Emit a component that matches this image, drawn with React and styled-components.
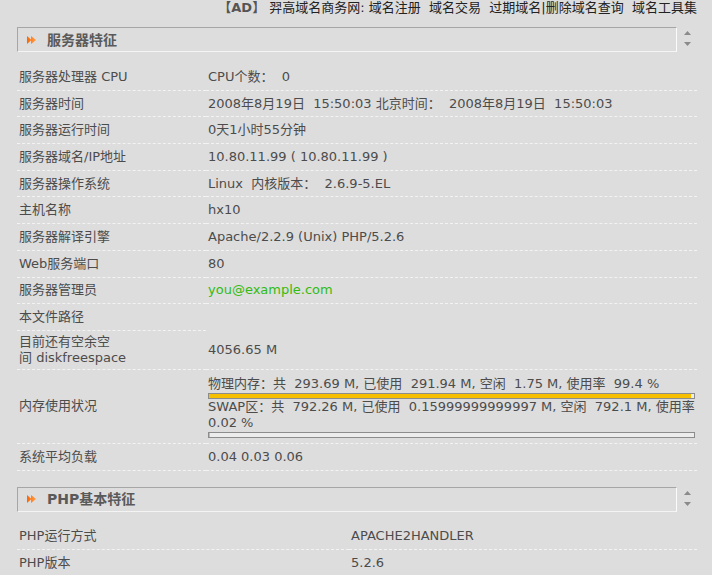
import React from "react";
import styled, { createGlobalStyle } from "styled-components";

// ------------------------------

const GlobalStyle = createGlobalStyle`
	html, body {
		margin: 0;
		background: #dddddd;
	}

	body {
		font-family: "DejaVu Sans", "Noto Sans CJK SC", sans-serif;
		font-size: 13px;
		color: #4c4c4c;
	}
`;

const Page = styled.div`
	padding: 0 15px 0 17px;
`;

const AdBar = styled.div`
	text-align: right;
	line-height: 16px;
	color: #222;
	white-space: pre;

	b {
		font-weight: bold;
		color: #555;
	}
`;

const SectionHead = styled.div`
	display: flex;
	margin-top: ${ p => p.$top }px;
	height: 25px;
`;

const HeadBox = styled.div`
	flex: 1;
	box-sizing: border-box;
	height: 25px;
	border: 1px solid;
	border-color: #a6a6a6 #fbfbfb #f4f4f4 #a6a6a6;
	display: flex;
	align-items: center;
	gap: 11px;
	padding-left: 9px;
`;

const HeadTitle = styled.span`
	font-size: 14px;
	font-weight: bold;
	color: #5a5a5a;
	line-height: 16px;
`;

const Spinner = styled.div`
	width: 20px;
	display: flex;
	flex-direction: column;
	align-items: center;
	justify-content: space-between;
	padding: 4px 0 6px;
	box-sizing: border-box;
`;

const InfoGrid = styled.div`
	display: grid;
	grid-template-columns: ${ p => p.$label }px 1fr;
	margin-top: 12px;
`;

const Cell = styled.div`
	box-sizing: border-box;
	min-height: 26.7px;
	padding: ${ p => p.$pad || "3px 2px" };
	line-height: 16px;
	display: flex;
	align-items: center;
	white-space: pre-wrap;
	border-bottom: 1px dashed ${ p => p.$bare ? "transparent" : "#f3f3f3" };
	color: ${ p => p.$link ? "#33bb11" : "#4c4c4c" };
`;

const MemBlock = styled.div`
	width: 100%;
	line-height: 16px;
`;

const Bar = styled.div`
	box-sizing: border-box;
	height: 6px;
	margin-top: 1px;
	border: 1px solid #8c8c8c;
	background: #ececec;
`;

const BarFill = styled.div`
	height: 100%;
	min-width: 1px;
	background: #f6c000;
`;

// ------------------------------

const Arrows = () => (
	<svg width = "9" height = "8" viewBox = "0 0 9 8">
		<defs>
			<linearGradient id = "orangeGrad" x1 = "0" x2 = "1" y1 = "0" y2 = "0">
				<stop offset = "0" stopColor = "#ff6400" />
				<stop offset = "1" stopColor = "#ffa04a" />
			</linearGradient>
		</defs>
		<path d = "M0 0 L4.5 4 L0 8 Z M4 0 L9 4 L4 8 Z" fill = "url(#orangeGrad)" />
	</svg>
);

const Triangle = ({ down }) => (
	<svg width = "7" height = "4" viewBox = "0 0 7 4">
		<path d = { down ? "M0 0 L7 0 L3.5 4 Z" : "M3.5 0 L7 4 L0 4 Z" } fill = "#8a8a8a" />
	</svg>
);

const Section = ({ title, top }) => (
	<SectionHead $top = { top }>
		<HeadBox>
			<Arrows />
			<HeadTitle>{ title }</HeadTitle>
		</HeadBox>
		<Spinner>
			<Triangle />
			<Triangle down />
		</Spinner>
	</SectionHead>
);

const serverRows = [
	[ "服务器处理器\u00a0CPU", "CPU个数：  0" ],
	[ "服务器时间", "2008年8月19日  15:50:03 北京时间：  2008年8月19日  15:50:03" ],
	[ "服务器运行时间", "0天1小时55分钟" ],
	[ "服务器域名/IP地址", "10.80.11.99 ( 10.80.11.99 )" ],
	[ "服务器操作系统", "Linux  内核版本：  2.6.9-5.EL" ],
	[ "主机名称", "hx10" ],
	[ "服务器解译引擎", "Apache/2.2.9 (Unix) PHP/5.2.6" ],
	[ "Web服务端口", "80" ],
	[ "服务器管理员", "you@example.com", true ],
	[ "本文件路径", "" ],
	[ "目前还有空余空间\u00a0diskfreespace", "4056.65 M" ],
];

const memory = [
	{ text: "物理内存：共  293.69 M, 已使用  291.94 M, 空闲  1.75 M, 使用率  99.4 %", used: 99.4 },
	{ text: "SWAP区：共  792.26 M, 已使用  0.15999999999997 M, 空闲  792.1 M, 使用率  0.02 %", used: 0.02 },
];

const phpRows = [
	[ "PHP运行方式", "APACHE2HANDLER" ],
	[ "PHP版本", "5.2.6" ],
];

// ------------------------------

export default () => (
	<Page>
		<GlobalStyle />

		<AdBar><b>【AD】</b> 羿高域名商务网: 域名注册  域名交易  过期域名|删除域名查询  域名工具集</AdBar>

		<Section title = "服务器特征" top = { 11 } />

		<InfoGrid $label = { 189 }>
			{
				serverRows.map(([ label, value, link ]) => (
					<React.Fragment key = { label }>
						<Cell>{ label }</Cell>
						<Cell $bare = { !value } $link = { link }>{ value }</Cell>
					</React.Fragment>
				))
			}

			<Cell>内存使用状况</Cell>
			<Cell $pad = "6px 2px 5px">
				<MemBlock>
					{
						memory.map(({ text, used }) => (
							<div key = { text }>
								<div>{ text }</div>
								<Bar><BarFill style = {{ width: `${ used }%` }} /></Bar>
							</div>
						))
					}
				</MemBlock>
			</Cell>

			<Cell>系统平均负载</Cell>
			<Cell>0.04 0.03 0.06</Cell>
		</InfoGrid>

		<Section title = "PHP基本特征" top = { 16 } />

		<InfoGrid $label = { 332 }>
			{
				phpRows.map(([ label, value ]) => (
					<React.Fragment key = { label }>
						<Cell>{ label }</Cell>
						<Cell>{ value }</Cell>
					</React.Fragment>
				))
			}
		</InfoGrid>
	</Page>
);
